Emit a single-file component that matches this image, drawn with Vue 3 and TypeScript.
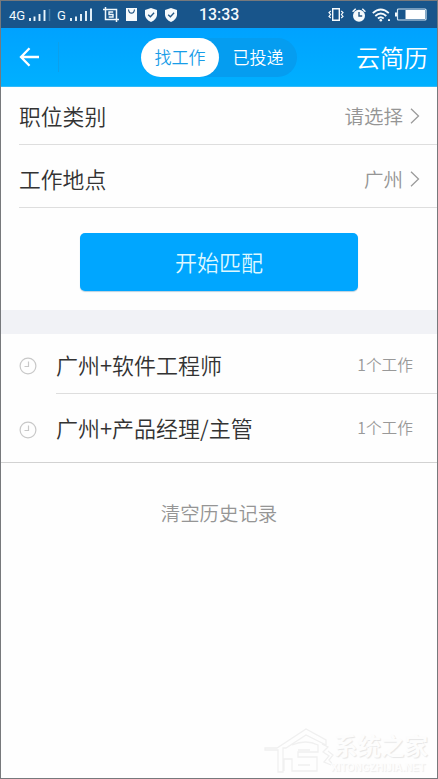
<script setup lang="ts">
import { ref } from 'vue'

interface Field {
  label: string
  value: string
}

interface HistoryItem {
  title: string
  count: number
}

const tabs = ['找工作', '已投递']
const activeTab = ref(0)

const fields: Field[] = [
  { label: '职位类别', value: '请选择' },
  { label: '工作地点', value: '广州' },
]

const history = ref<HistoryItem[]>([
  { title: '广州+软件工程师', count: 1 },
  { title: '广州+产品经理/主管', count: 1 },
])
</script>

<template>
  <main class="screen">
    <div class="status">
      <div class="status-left">
        <span class="net net-4g">4G</span>
        <svg class="bars bars-a" width="22" height="14" viewBox="0 0 22 14">
          <path d="M1 10v3M5.500 8.500v4.500M10.500 6v7M15.500 2v11" stroke="#e9f5fc" stroke-width="1.900" />
          <path d="M20.500 1v12" stroke="#4379a5" stroke-width="1.500" />
        </svg>
        <span class="net net-g">G</span>
        <svg class="bars bars-b" width="22" height="14" viewBox="0 0 22 14">
          <path d="M1 10v3M6 8.500v4.500M11 6v7M16 3v10M21 .5v12.500" stroke="#e9f5fc" stroke-width="1.900" />
        </svg>
        <svg class="crop" width="16" height="15" viewBox="0 0 16 15" fill="none" stroke="#eef7fc">
          <path d="M2.500 0v12.500H16M0 2.500h13.500V15" stroke-width="1.500" />
          <path d="M10.200 5H6v2.500h4V10H5.700" stroke-width="1.400" />
        </svg>
        <svg class="bag" width="11" height="13" viewBox="0 0 11 13">
          <path d="M0 0h11v13H0z" fill="#f6fafc" />
          <path d="M2.500 1.500q.4 3.700 3 3.700t3-3.700" fill="none" stroke="#245784" stroke-width="1.200" />
        </svg>
        <svg v-for="n in 2" :key="n" class="shield" width="12" height="14" viewBox="0 0 12 14">
          <path d="M6 0l6 2v5q-.5 4.500-6 7Q.5 11.500 0 7V2z" fill="#f6fafc" />
          <path d="M3.200 6.700l2.200 2.100 3.700-4" fill="none" stroke="#245784" stroke-width="1.300" />
        </svg>
      </div>
      <time class="clock">13:33</time>
      <div class="status-right">
        <svg width="16" height="13" viewBox="0 0 16 13" fill="none" stroke="#f6fafc">
          <path d="M4.700.700h6.600v11.600H4.700z" stroke-width="1.400" />
          <path d="M2.800 3L1 4.500l1.600 2L1 8.500 2.800 10M13.200 3L15 4.500l-1.600 2 1.600 2-1.800 1.500" stroke-width="1.200" />
        </svg>
        <svg class="alarm" width="14" height="14" viewBox="0 0 14 14">
          <circle cx="7" cy="7.700" r="6" fill="#f6fafc" />
          <path d="M.6 3.700L3.700.8M13.400 3.700L10.300.8" stroke="#f6fafc" stroke-width="1.500" />
          <path d="M7 4v4h3.200" fill="none" stroke="#245784" stroke-width="1.400" />
        </svg>
        <svg class="wifi" width="19" height="14" viewBox="0 0 19 14" fill="none" stroke="#f6fafc" stroke-width="1.800">
          <path d="M.8 5.200q8-7.500 16 0M3.300 8q5.500-5 11 0M5.900 10.500q2.900-2.600 5.800 0" />
          <circle cx="8.800" cy="12.300" r="1.300" fill="#f6fafc" stroke="none" />
          <path d="M16 12.200h2" />
        </svg>
        <svg class="battery" width="32" height="13" viewBox="0 0 32 13">
          <path d="M0 4.500h2v4H0z" fill="#f6fafc" />
          <rect x="2.500" y="1" width="28.500" height="11" rx="1" fill="none" stroke="#d3e4f0" stroke-width="1.200" />
          <path d="M10.500 2H30v9H10.500z" fill="#fff" />
        </svg>
      </div>
    </div>

    <header class="header">
      <button class="back" type="button" aria-label="返回">
        <svg width="21" height="20" viewBox="0 0 21 20" fill="none" stroke="#fff" stroke-width="2.300">
          <path d="M20 10H2M10.500 1.200L2 10l8.500 8.800" />
        </svg>
      </button>
      <nav class="tabs">
        <button
          v-for="(tab, i) in tabs"
          :key="tab"
          type="button"
          class="tab"
          :class="{ active: activeTab === i }"
          @click="activeTab = i"
        >{{ tab }}</button>
      </nav>
      <span class="resume">云简历</span>
    </header>

    <section class="form">
      <div v-for="field in fields" :key="field.label" class="field">
        <span class="label">{{ field.label }}</span>
        <span class="value">{{ field.value }}</span>
        <svg class="chevron" width="10" height="16" viewBox="0 0 10 16" fill="none" stroke="#9b9b9b" stroke-width="1.300">
          <path d="M1 .7L8.500 8 1 15.300" />
        </svg>
      </div>
      <button class="match" type="button">开始匹配</button>
    </section>

    <section class="history">
      <div v-for="item in history" :key="item.title" class="entry">
        <svg class="recent" width="18" height="18" viewBox="0 0 18 18" fill="none" stroke="#c8c8c8" stroke-width="1.200">
          <circle cx="9" cy="9" r="7.900" />
          <path d="M9.500 4.500v5H5.500" />
        </svg>
        <div class="entry-body">
          <span class="title">{{ item.title }}</span>
          <span class="count">{{ item.count }}个工作</span>
        </div>
      </div>
    </section>
    <button class="clear" type="button" @click="history = []">清空历史记录</button>

    <div class="watermark">
      <svg width="70" height="46" viewBox="0 0 70 46" fill="none" stroke="#f0f0f0" stroke-width="1.300">
        <path d="M1 20h12L42 1l20 11v5L42 7 22 20h-3v24h-5V22H1zM28 17q14-6 26 0v7H34v5h19v14H28V31h-8v12M34 22h12M34 37h12M58 16l6 3-5 5 6 4-5 6 7 3M64 23l5 4-4 5 4 5" />
      </svg>
      <div class="mark-text">
        <span class="mark-name">系统之家</span>
        <span class="mark-url">XITONGZHIJIA.NET</span>
      </div>
    </div>
  </main>
</template>

<style>
body {
  margin: 0;
  background: #fff;
}
</style>

<style scoped>
.screen {
  position: relative;
  box-sizing: border-box;
  width: 438px;
  height: 779px;
  overflow: hidden;
  border: 1px solid #77797c;
  background: #fefefe;
  font-family: "Noto Sans CJK SC", sans-serif;
  font-weight: 350;
  color: #333;
}
button {
  margin: 0;
  padding: 0;
  border: 0;
  background: none;
  font: inherit;
  color: inherit;
}
svg {
  display: block;
  flex: none;
}
.status {
  display: grid;
  grid-template-columns: 197px 130px 1fr;
  height: 27px;
  background: #18558b;
  color: #f3f9fd;
}
.status-left,
.status-right {
  display: flex;
  align-items: center;
}
.status-left {
  padding-left: 8px;
}
.net {
  flex: none;
  font: 13px/16px Roboto, sans-serif;
  padding-top: 2px;
}
.net-4g {
  width: 20px;
}
.net-g {
  width: 13px;
}
.bars-a {
  margin-right: 6px;
}
.crop {
  margin-left: 11px;
}
.bag {
  margin: 0 8px 0 7px;
}
.shield + .shield {
  margin-left: 8px;
}
.clock {
  font: 500 15.900px/27px Roboto, sans-serif;
  padding-left: 1px;
}
.alarm {
  margin-left: 8px;
}
.wifi {
  margin-left: 6px;
}
.battery {
  margin-left: 4px;
}
.header {
  display: flex;
  align-items: center;
  box-sizing: border-box;
  height: 59px;
  padding: 0 9px 0 0;
  background: linear-gradient(#00a2ff, #00b0ff);
  border-bottom: 1px solid #32baf9;
  color: #fff;
}
.back {
  box-sizing: border-box;
  width: 58px;
  height: 30px;
  padding-left: 18px;
  border-right: 1px solid #0ba0ec;
}
.tabs {
  display: flex;
  width: 156px;
  height: 39px;
  margin-left: 82px;
  border-radius: 20px;
  background: #059df0;
}
.tab {
  width: 78px;
  height: 39px;
  border-radius: 20px;
  font-size: 17px;
  line-height: 38px;
}
.tab.active {
  background: #fff;
  color: #189de8;
}
.resume {
  margin-left: auto;
  font-size: 24px;
  line-height: 56px;
}
.form {
  box-sizing: border-box;
  height: 223px;
}
.field {
  display: flex;
  align-items: center;
  box-sizing: border-box;
  height: 63px;
  margin-left: 18px;
  padding: 6px 17px 0 0;
  border-bottom: 1px solid #dedede;
}
.field:first-child {
  height: 58px;
  padding-top: 0;
}
.label {
  flex: 1;
  font-size: 21.800px;
  line-height: 32px;
}
.value {
  margin-right: 7px;
  font-size: 19.500px;
  line-height: 30px;
  color: #959595;
}
.match {
  display: block;
  width: 278px;
  height: 58px;
  margin: 25px auto 0 79px;
  padding-bottom: 2px;
  border-radius: 5px;
  background: #00a6ff;
  box-shadow: 0 1px 1px #b9d0df;
  font-size: 22px;
  line-height: 56px;
  color: #ddf8ff;
}
.history {
  border-top: 24px solid #f1f2f6;
  border-bottom: 1px solid #d2d2d2;
}
.entry {
  display: flex;
  align-items: center;
  height: 60px;
  padding-left: 18px;
}
.entry + .entry {
  height: 67px;
  padding-bottom: 1px;
}
.recent {
  margin: 4px 19px 0 0;
}
.entry-body {
  display: flex;
  flex: 1;
  align-items: center;
  box-sizing: border-box;
  height: 100%;
  padding: 2px 24px 0 0;
  border-bottom: 1px solid #dedede;
}
.entry:last-child .entry-body {
  padding-top: 0;
  border: 0;
}
.title {
  flex: 1;
  padding-bottom: 2px;
  font-size: 22px;
  line-height: 32px;
}
.count {
  font-size: 15.700px;
  line-height: 24px;
  color: #999;
}
.clear {
  display: block;
  margin: 35px auto 0;
  font-size: 19.400px;
  line-height: 30px;
  color: #959595;
}
.watermark {
  position: absolute;
  left: 263px;
  top: 727px;
  display: flex;
}
.mark-text {
  display: flex;
  flex-direction: column;
}
.mark-name {
  font-size: 23.500px;
  font-weight: 700;
  line-height: 34px;
  color: #fdfdfd;
  text-shadow: 1px 1px 1px #e6e6e6;
}
.mark-url {
  margin-left: -3px;
  font: 700 10.200px/12px "Liberation Sans", sans-serif;
  color: #fdfdfd;
  text-shadow: 1px 1px 1px #ececec;
}
</style>
